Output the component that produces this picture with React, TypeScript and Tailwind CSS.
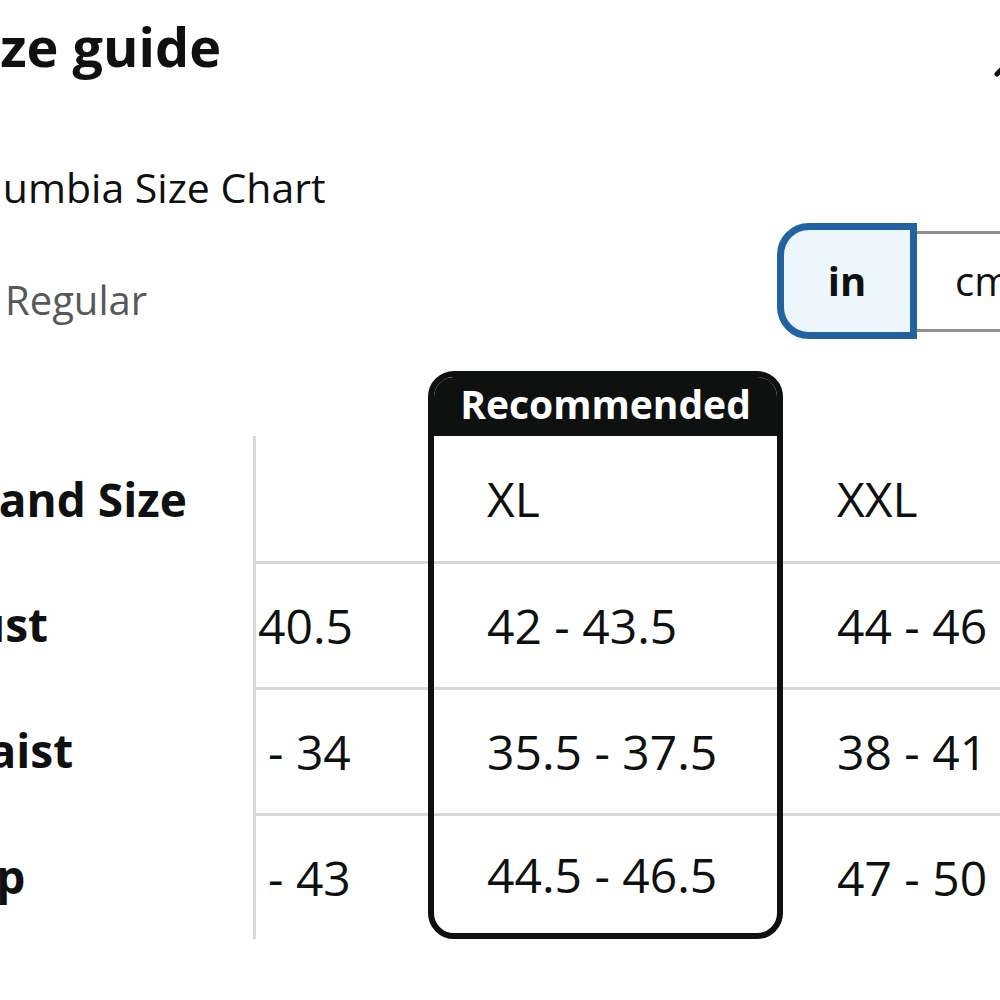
const labels = [
  { text: "Brand Size", cls: "-ml-[53px]" },
  { text: "Bust", cls: "-ml-[56px]" },
  { text: "Waist", cls: "-ml-[56px]" },
  { text: "Hip", cls: "-ml-[53px]" },
];

const colL = [
  { text: "", cls: "pl-[2px]" },
  { text: "40.5", cls: "pl-[2px]" },
  { text: "- 34", cls: "pl-[12px]" },
  { text: "- 43", cls: "pl-[12px]" },
];

const colXL = ["XL", "42 - 43.5", "35.5 - 37.5", "44.5 - 46.5"];
const colXXL = ["XXL", "44 - 46", "38 - 41", "47 - 50"];

export default function App() {
  return (
    <div className="relative w-[1000px] h-[1000px] overflow-hidden bg-white text-[#0f1111] font-['Open_Sans',sans-serif]">
      {/* collapse button, mostly off the right edge */}
      <button className="absolute left-[990px] top-[40px] w-[50px] h-[50px]" aria-label="Close">
        <svg viewBox="0 0 50 50" className="w-[50px] h-[50px]" fill="none" stroke="#0f1111" strokeWidth={5} strokeLinecap="round" strokeLinejoin="round">
          <path d="M7 34L25 16L43 34" />
        </svg>
      </button>

      <div className="pt-[10px]">
        <div className="overflow-hidden whitespace-nowrap">
          <h1 className="-ml-[46px] text-[54px] leading-[72px] font-bold">Size guide</h1>
        </div>

        <div className="mt-[85px] overflow-hidden whitespace-nowrap">
          <p className="-ml-[58px] text-[41px] leading-none">Columbia Size Chart</p>
        </div>

        <div className="mt-[15px] flex items-start whitespace-nowrap">
          <div className="w-[777px] shrink-0 pt-[57px] pl-[5px] text-[40px] leading-none text-[#565959]">Regular</div>
          <div className="flex items-center h-[116px] shrink-0">
            <button className="w-[140px] h-[116px] flex items-center justify-center rounded-l-[32px] border-[7px] border-[#2162a1] bg-[#edf6fd] text-[40px] leading-none font-bold">
              in
            </button>
            <button className="w-[150px] h-[101px] flex items-center pl-[38px] border-y-[3px] border-[#8d9096] bg-white text-[40px] leading-none">
              cm
            </button>
          </div>
        </div>

        {/* size table */}
        <div className="mt-[32px] flex whitespace-nowrap">
          <div className="w-[256px] shrink-0 pt-[65px]">
            <div className="border-r-[3px] border-[#d5d9d9]">
              {labels.map((l, i) => (
                <div key={l.text} className={`${i === 0 ? "h-[125px]" : "h-[126px]"} flex items-center overflow-hidden text-[46px] leading-none font-bold`}>
                  <span className={`${l.cls} inline-block`}>{l.text}</span>
                </div>
              ))}
            </div>
          </div>

          <div className="w-[172px] shrink-0 pt-[65px]">
            {colL.map((c, i) => (
              <div key={i} className={`${i === 0 ? "h-[125px]" : "h-[126px] border-t-[3px] border-[#d5d9d9]"} ${c.cls} flex items-center text-[48px] leading-none`}>
                {c.text}
              </div>
            ))}
          </div>

          <div className="w-[355px] shrink-0 flex flex-col rounded-[26px] border-[6px] border-[#0f1111] overflow-hidden">
            <div className="h-[59px] bg-[#0f1111] flex items-center justify-center pb-[6px] text-white text-[39px] leading-none font-bold">
              Recommended
            </div>
            {colXL.map((v, i) => (
              <div
                key={v}
                className={`${i === 0 ? "h-[125px]" : i === 3 ? "h-[120px] border-t-[3px] border-[#d5d9d9]" : "h-[126px] border-t-[3px] border-[#d5d9d9]"} flex items-center pl-[53px] text-[48px] leading-none`}
              >
                {v}
              </div>
            ))}
          </div>

          <div className="w-[360px] shrink-0 pt-[65px]">
            {colXXL.map((v, i) => (
              <div key={v} className={`${i === 0 ? "h-[125px]" : "h-[126px] border-t-[3px] border-[#d5d9d9]"} flex items-center pl-[54px] text-[48px] leading-none`}>
                {v}
              </div>
            ))}
          </div>
        </div>
      </div>
    </div>
  );
}
